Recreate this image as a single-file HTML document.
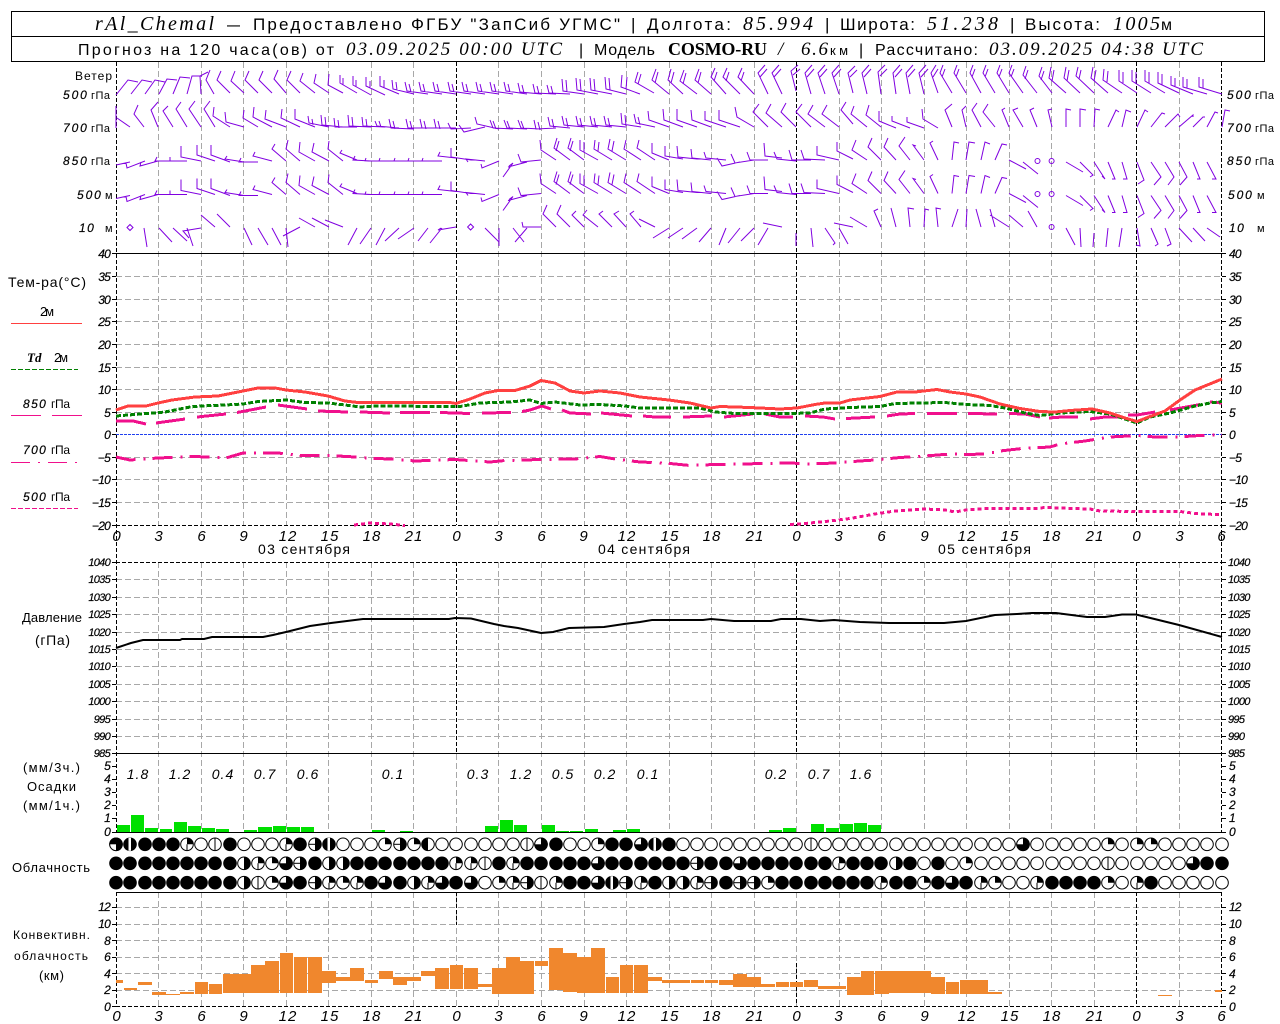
<!DOCTYPE html>
<html lang="ru"><head><meta charset="utf-8"><title>rAl_Chemal</title>
<style>
html,body{margin:0;padding:0;background:#fff}
svg{display:block}
text{font-family:"Liberation Sans","DejaVu Sans",sans-serif;fill:#000}
.s{font-family:"Liberation Serif",serif;font-style:italic}
.b{font-family:"Liberation Serif",serif;font-weight:bold}
.n{font-style:italic;font-size:12px;letter-spacing:-.8px;stroke:#000;stroke-width:.2}
.p{font-style:italic;font-size:11px;letter-spacing:-.7px;stroke:#000;stroke-width:.2}
.h{font-style:italic;font-size:15px;letter-spacing:1px;text-anchor:middle}
.l{font-size:12px;letter-spacing:1px}
.e{text-anchor:end}
.m{text-anchor:middle}
.v{font-style:italic;font-size:14px;letter-spacing:1px;text-anchor:middle}
.t{font-size:17px}
.u{font-size:16px}
.s.t{font-size:20px}
.s.u{font-size:19px}
</style></head><body>
<svg width="1280" height="1024" viewBox="0 0 1280 1024" xmlns="http://www.w3.org/2000/svg">
<defs>
<g id="E"><circle r="6.3" fill="#fff" stroke="#000"/></g>
<g id="F"><circle r="6.8" fill="#000"/></g>
<g id="V"><use href="#E"/><path d="M0-6V6" stroke="#000"/></g>
<g id="Q"><use href="#E"/><path d="M0 0V-6.3A6.3 6.3 0 0 1 6.3 0Z"/></g>
<g id="T"><use href="#Q"/><path d="M0 0V6" stroke="#000"/></g>
<g id="R"><use href="#E"/><path d="M0-6.3A6.3 6.3 0 0 1 0 6.3Z"/></g>
<g id="L"><use href="#E"/><path d="M0-6.3A6.3 6.3 0 0 0 0 6.3Z"/></g>
<g id="I"><use href="#R"/><path d="M-6 0H0" stroke="#000"/></g>
<g id="S"><use href="#F"/><rect x="-1.5" y="-6.5" width="2.5" height="13" fill="#fff"/></g>
<g id="A"><use href="#F"/><path d="M0 0V-6H-6V0Z" fill="#fff"/><circle r="6.3" fill="none" stroke="#000"/></g>
<g id="a"><use href="#F"/><path d="M0 0V6H-6V0Z" fill="#fff"/><circle r="6.3" fill="none" stroke="#000"/></g>
</defs>

<!-- Title boxes -->
<path d="M11.5 11.5H1264.5V61.5H11.5ZM11.5 36.5H1264.5" fill="none" stroke="#000" shape-rendering="crispEdges"/>
<text class="s t" x="95" y="30" textLength="119" lengthAdjust="spacing">rAl_Chemal</text>
<text class="t" x="227" y="30" textLength="13" lengthAdjust="spacingAndGlyphs">—</text>
<text class="t" x="253" y="30" textLength="367">Предоставлено ФГБУ "ЗапСиб УГМС"</text>
<text class="t" x="631" y="30">|</text>
<text class="t" x="647" y="30" textLength="84">Долгота:</text>
<text class="s t" x="743" y="30" textLength="70">85.994</text>
<text class="t" x="825" y="30">|</text>
<text class="t" x="840" y="30" textLength="75">Широта:</text>
<text class="s t" x="927" y="30" textLength="71">51.238</text>
<text class="t" x="1010" y="30">|</text>
<text class="t" x="1025" y="30" textLength="75">Высота:</text>
<text class="s t" x="1113" y="30" textLength="47">1005</text>
<text class="u" x="1161" y="30" textLength="12">м</text>

<text class="u" x="78" y="55" textLength="256">Прогноз на 120 часа(ов) от</text>
<text class="s u" x="346" y="55" textLength="216">03.09.2025 00:00 UTC</text>
<text class="u" x="579" y="55">|</text>
<text class="u" x="594" y="55" textLength="61">Модель</text>
<text class="b u" x="668" y="55" textLength="99" style="font-size:18px">COSMO-RU</text>
<text class="s u" x="778" y="55">/</text>
<text class="s u" x="801" y="55" textLength="27">6.6</text>
<text x="830" y="55" textLength="18" style="font-size:13px">км</text>
<text class="u" x="859" y="55">|</text>
<text class="u" x="875" y="55" textLength="103">Рассчитано:</text>
<text class="s u" x="989" y="55" textLength="214">03.09.2025 04:38 UTC</text>

<g shape-rendering="crispEdges">
<!-- grey grid -->
<path fill="none" stroke="#a8a8a8" stroke-dasharray="6 3" d="
M158.5 62V525M201.5 62V525M243.5 62V525M286.5 62V525M328.5 62V525M371.5 62V525M413.5 62V525M498.5 62V525M541.5 62V525M584.5 62V525M626.5 62V525M669.5 62V525M711.5 62V525M754.5 62V525M839.5 62V525M881.5 62V525M924.5 62V525M966.5 62V525M1009.5 62V525M1051.5 62V525M1094.5 62V525M1179.5 62V525
M158.5 562V832M201.5 562V832M243.5 562V832M286.5 562V832M328.5 562V832M371.5 562V832M413.5 562V832M456.5 754V832M498.5 562V832M541.5 562V832M584.5 562V832M626.5 562V832M669.5 562V832M711.5 562V832M754.5 562V832M796.5 754V832M839.5 562V832M881.5 562V832M924.5 562V832M966.5 562V832M1009.5 562V832M1051.5 562V832M1094.5 562V832M1136.5 754V832M1179.5 562V832
M158.5 892V1006M201.5 892V1006M243.5 892V1006M286.5 892V1006M328.5 892V1006M371.5 892V1006M413.5 892V1006M456.5 892V1006M498.5 892V1006M541.5 892V1006M584.5 892V1006M626.5 892V1006M669.5 892V1006M711.5 892V1006M754.5 892V1006M796.5 892V1006M839.5 892V1006M881.5 892V1006M924.5 892V1006M966.5 892V1006M1009.5 892V1006M1051.5 892V1006M1094.5 892V1006M1179.5 892V1006
M116 276.5H1222M116 299.5H1222M116 321.5H1222M116 344.5H1222M116 367.5H1222M116 389.5H1222M116 412.5H1222M116 457.5H1222M116 479.5H1222M116 502.5H1222
M116 579.5H1222M116 597.5H1222M116 614.5H1222M116 632.5H1222M116 649.5H1222M116 666.5H1222M116 684.5H1222M116 701.5H1222M116 719.5H1222M116 736.5H1222
M116 907.5H1222M116 924.5H1222M116 940.5H1222M116 957.5H1222M116 973.5H1222M116 990.5H1222"/>
<!-- day lines and axes -->
<path fill="none" stroke="#000" stroke-dasharray="4 2" d="M116.5 62V832M1221.5 62V832M116.5 892V1006M1221.5 892V1006M456.5 62V525M796.5 62V525M1136.5 62V525M456.5 562V754M796.5 562V754M1136.5 562V754M456.5 892V925M796.5 963V1003M1136.5 892V1006M116 525.5H1222M116 562.5H1222M116 1006.5H1222"/>
<path fill="none" stroke="#000" d="M116 253.5H1222M116 753.5H1222M116 832.5H1222M116 892.5H1222"/>
<path fill="none" stroke="#000" d="M112 253.5h4M112 276.5h4M112 299.5h4M112 321.5h4M112 344.5h4M112 367.5h4M112 389.5h4M112 412.5h4M112 434.5h4M112 457.5h4M112 479.5h4M112 502.5h4M112 525.5h4M112 562.5h4M112 579.5h4M112 597.5h4M112 614.5h4M112 632.5h4M112 649.5h4M112 666.5h4M112 684.5h4M112 701.5h4M112 719.5h4M112 736.5h4M112 753.5h4M112 766.5h4M112 779.5h4M112 792.5h4M112 805.5h4M112 818.5h4M112 832.5h4M112 907.5h4M112 924.5h4M112 940.5h4M112 957.5h4M112 973.5h4M112 990.5h4M112 1006.5h4
M1222 253.5h4M1222 276.5h4M1222 299.5h4M1222 321.5h4M1222 344.5h4M1222 367.5h4M1222 389.5h4M1222 412.5h4M1222 434.5h4M1222 457.5h4M1222 479.5h4M1222 502.5h4M1222 525.5h4M1222 562.5h4M1222 579.5h4M1222 597.5h4M1222 614.5h4M1222 632.5h4M1222 649.5h4M1222 666.5h4M1222 684.5h4M1222 701.5h4M1222 719.5h4M1222 736.5h4M1222 753.5h4M1222 766.5h4M1222 779.5h4M1222 792.5h4M1222 805.5h4M1222 818.5h4M1222 832.5h4M1222 907.5h4M1222 924.5h4M1222 940.5h4M1222 957.5h4M1222 973.5h4M1222 990.5h4M1222 1006.5h4"/>
</g>

<!-- Wind barbs -->
<g fill="none" stroke="#8000e0" stroke-width="1">
<path id="r1" d="M116 95l12-15 10 2M131 94l11-14 10 2M145 94l10-14 10 2M159 94l8-15 10 1M173 94l7-17 10 1M187 94l5-18 10 0M201 94l-1-18 8-4M214 94l-8-14 4-10M230 93l-13-13 4-9M244 93l-13-12 4-10M258 93l-13-13 4-9M272 93l-13-13 4-9M286 93l-12-14 4-9M300 93l-13-13 4-9M315 93l-15-12 3-8M329 93l-15-10 2-9M343 93l-15-8 1-11M357 93l-17-10 0-8m3 10 0-7M371 95l-18-10 0-9m3 11 0-7M385 95l-19-9 0-9m4 11 0-7M399 94l-19-8 0-10m4 12 0-8M414 94l-21-5-1-9m5 10-1-8
M428 94l-21-3-2-9m6 10-2-8M442 94l-21-3-2-9m6 10-2-8M456 94l-21-3-2-9m6 10-2-8M471 94l-21-3-2-9m6 10-2-8M485 94l-21-3-2-9m6 10-2-8M499 94l-21-3-2-9m6 10-2-8M513 94l-21-3-2-9m6 10-2-8M527 94l-21-3-2-9m6 10-2-8M541 94l-21-2-2-9m6 10-2-8M556 94l-21-1-2-9m6 10-2-8M570 94l-21-1-2-8m6 9-2-8M584 94l-21-3-1-12m5 13-1-12M598 94l-21-4-1-12m5 13-1-12M612 94l-21-4-1-12m5 13-1-12M626 94l-20-5-1-12m5 13-1-12M640 94l-19-7 1-12m4 14 1-12
M654 93l-19-11 3-10m0 12 3-10M669 94l-17-14 4-11m-1 14 3-11M683 94l-15-14 3-11m0 14 3-11M697 94l-17-13 4-11m-1 14 3-11M711 94l-16-14 4-11m-1 14 3-11M726 94l-15-17 4-9m-1 13 3-9M740 94l-17-17 4-9m-1 13 3-9M754 94l-16-17 4-9m-1 13 3-9
M768 94l-10-21 7-8m-5 12 7-8M782 94l-10-21 7-8m-5 12 7-8M796 91l-5-20 7-6m-5 10 7-6M811 94l-6-21 7-8m-5 12 7-8M825 94l-7-21 7-8m-5 12 7-8M839 94l-7-21 7-8m-5 12 7-8M853 93l-5-20 7-7m-5 11 7-7M867 94l-5-21 7-8m-5 12 7-8M881 94l-3-22 7-7m-5 11 7-7M896 94l-3-21 7-8m-5 12 7-8M910 94l-4-21 7-8m-5 12 7-8M924 94l-5-21 7-8m-5 12 7-8M938 93l-7-20 5-8m-3 12 5-8
M952 93l-12-20 3-8m-1 12 3-8M966 93l-12-20 3-8m-1 12 3-8M981 93l-11-20 3-8m-1 12 3-8M995 93l-12-20 3-8m-1 12 3-8M1009 93l-12-20 3-8m-1 12 3-8M1023 93l-14-20 3-8m-1 12 3-8M1037 93l-14-18 3-9m-1 13 3-9M1052 93l-13-17 3-9m-1 13 3-9
M1066 93l-17-15 2-11m1 14 2-11M1080 93l-16-15 2-11m1 14 2-11M1094 93l-18-17 2-9m1 12 2-9M1108 93l-17-15 2-11m1 14 2-11M1122 93l-19-13 1-11m3 13 1-11M1137 93l-18-12 0-11m4 13 0-11M1151 93l-19-12 0-11m4 13 0-11M1165 93l-20-12 0-11m4 13 0-11M1179 93l-21-10 0-11m4 13 0-11M1193 94l-22-9 0-9m4 11 0-9M1207 94l-24-7 0-10m4 12 0-10M1222 94l-23-7 0-10m4 12 0-10"/>
<path id="r2" d="M116 128l0-22M130 127l-13-9M144 127l-10-13 4-9M158 127l-7-17 7-8M173 127l-10-16 5-5M187 127l-11-18 5-7M201 127l-12-18 6-8M215 127l-11-18 6-8M230 127l-17-11 1-9M244 127l-18-5-1-10M258 127l-15-9 1-8M272 127l-19-10 1-10M286 127l-21-8 1-9M300 127l-19-9 1-9M315 127l-20-8 0-10M329 127l-20-4-1-7m5 9-1-6M343 127l-21-2-1-10m5 11-1-9M357 127l-22 0-1-9m5 10-1-8M371 127l-22-1-1-11m5 12-1-10M385 127l-22-1-1-9m5 10-1-8M399 128l-22-2-2-5m6 6-2-6M414 129l-23-1-2-9m6 10-2-8
M428 128l-20 0-2-9m6 10-2-8M442 128l-20 0-2-9m6 10-2-8M456 128l-20 0-2-9m6 10-2-8M471 128l-20 1-3-6M485 127l-21 5-5-7M499 129l-22-5-2-7M513 129l-20-1-3-8m6 9-3-8M527 129l-20-1-3-8m6 9-3-8M541 129l-20-1-3-8m6 9-3-8M556 128l-20 1-2-9m6 10-2-8M570 128l-20-2-2-9m6 11-2-9M584 127l-20-2-2-9m6 11-2-9M598 127l-20-2-2-9m6 11-2-9M612 127l-20-2-2-9m6 11-2-9M626 127l-20-2-2-9m6 11-2-9M641 127l-19-3-1-11m5 13-1-11M655 127l-19-4-2-9m6 11-2-8
M669 127l-20-7-1-9M683 127l-19-7-1-11M697 127l-20-7 0-11M711 127l-19-7-1-10M726 127l-21-7 0-9M740 127l-21-7 0-10M754 127l-17-10-2-10M768 127l-15-15 6-8M782 127l-16-14 5-9M796 127l-15-15 5-9M811 127l-15-15 6-8M825 127l-17-13 5-9M839 127l-17-13 5-9M853 124l-12-14 5-8M867 127l-16-13 3-8M881 127l-15-12 3-10M896 128l-17-7 0-10M910 128l-18-7 0-5M924 128l-17-6 0-5M938 128l-15-9-1-10M952 127l-7-17 7-6M966 127l-4-17 4-4M981 127l-9-17 5-7M995 127l-12-15 5-8M1009 127l-7-17 3-2M1023 127l-10-17 5-2M1037 127l-7-17 4-2M1052 127l-4-17 4-1M1066 127l0-18 5 1M1080 127l0-18 6 1M1094 127l1-18 5 1M1108 127l8-17 3 2M1122 127l4-17 5 2M1137 127l8-17 3 2M1151 127l11-14 3 1M1165 127l13-13 2 3M1179 127l14-12 0 2M1193 127l10-10 2 0M1207 127l8-15 3 1M1222 127l3-17 5 1"/>
<path id="r3" d="M130 162l-14 3M145 161l-18 7-1-5M158 161l-18 5 1-4M173 161l-18 0 2-4M187 161l-17 0 0-4M201 161l-20-4 0-11M215 161l-18-6 0-10M230 162l-19-7 0-10M244 162l-19-3 2-3M258 162l-19 0 2-4M272 161l-19-5 2-4M286 161l-14-12 3-5M300 161l-14-12 2-9M315 161l-16-9 1-10M329 161l-17-9 2-9M343 161l-15-12 1-8M357 160l-17-7 2-3M371 161l-18-1 2-4M385 161l-20 0 1-3M399 161l-20 0 1-3M414 161l-20 0 1-3M428 161l-20 0 1-3M442 161l-20 0 1-3M456 158l-18-2 2-4M471 160l-20-3 0-9M485 161l-19-2 2 3M499 161l-17 7-1-4M513 163l-10 14M513 163l-4 3M527 162l-19 5M541 160l-20 2-3-8M556 160l-15-10-1-10M570 160l-16-12 3-10m-1 13 3-10M584 160l-16-12 3-10m-1 13 3-10M598 160l-18-10 0-10m4 12 0-10M612 160l-18-11 1-9m3 11 1-9M626 160l-18-11 2-10m2 12 2-10M641 160l-17-11 2-9M655 160l-18-12 2-8M669 160l-17-7 0-10M683 159l-18-3 0-10M697 159l-19-2-1-11M711 160l-19-2-1-9M726 160l-20-2-2-6M740 162l-18 4-5-8M754 160l-19 3-4-9M768 160l-18 0-3-8M782 158l-17-2-1-13M796 161l-19-2-3-7M811 160l-19 0-3-10M825 160l-21-1-3-9M839 160l-22-5 0-9M853 159l-16-8 0-9M867 160l-15-10 4-10M881 160l-13-13 4-9M896 160l-12-13 4-9M910 160l-11-14 6-9M924 160l-11-15 3 1M938 160l-8-17 3-2M952 160l2-18 5 1M966 160l3-18 6 1M981 160l4-18 5 2M995 160l7-16 5 1M1009 160l17 9M1023 162l15 12M1066 162l17 10M1080 162l13 13-3 2M1094 162l11 17-3-3M1108 162l7 17-3 0M1122 162l5 17-4 0M1137 162l7 18-6 4M1151 162l10 15-7 8M1165 162l9 15-6 8M1179 162l8 15-7 8M1193 162l7 17-3 0M1207 162l9 17-4 0"/>
<use href="#r3" y="33.5"/>
<path id="r5" d="M144 228l3 19M159 228l13 14M173 228l14 13M187 228l6 18M201 228l-18 3 6 7M215 227l-14-12M230 227l-13-13M244 228l8 17M258 228l10 17M272 228l9 17M286 228l2 19M300 227l-17 9M315 227l-16-9M329 227l-17-9M343 227l-18-7M357 228l-9 17M371 228l-11 16M385 228l-9 17M399 228l-14 13M414 228l-16 11M428 228l-10 13M442 228l-12 15M456 227l-18 3 3-2M485 228l14 14M499 228l0 18M513 228l11 14M527 228l-12 14M541 227l-18 0-1-5M556 227l-13-13 4-9M570 227l-13-13 4-9M584 227l-12-12 4-4M598 227l-15-12 4-5M612 227l-13-13 4-3M626 227l-12-13 5-3M641 227l-11-13 4-3M655 227l-16-8M669 228l-16 10M683 228l-15 10M697 228l-15 11M711 228l-12 14M726 228l-7 17M740 228l-12 15M754 228l-13 13M768 228l-10 17M782 227l-19-4M796 233l0 13M811 228l2 19M825 228l10 15-2 2M839 228l9 16M853 227l-19-4M867 227l-17-10M881 227l-7-16 4-2M896 227l-5-19M910 227l-2-19 6 1M924 227l1-18 4 1M938 227l-2-19 5 1M952 227l6-18M966 227l1-18M981 227l-5-18M995 227l-5-18M1009 227l-19-12M1023 227l-14-12M1037 227l-9-16M1066 228l9 17M1080 228l1 19M1094 233l-1 14M1108 228l-2 19M1122 228l-3 19M1137 228l3 18-4-1M1151 228l7 16-3 2M1165 228l6 16-4 2M1179 228l13 14M1193 228l12 13M1207 228l13 9"/>
<path d="M130 224.5l3 3-3 3-3-3zM470.6 224l3 3-3 3-3-3z"/>
<circle cx="1037.5" cy="161" r="2.5"/><circle cx="1051.6" cy="161" r="2.5"/><circle cx="1037.5" cy="194" r="2.5"/><circle cx="1051.6" cy="194" r="2.5"/><circle cx="1051.6" cy="227" r="2.5"/>
</g>

<!-- Temperature -->
<g fill="none" shape-rendering="crispEdges">
<path stroke="#2040f0" stroke-dasharray="3 1" d="M116 434.5H1222"/>
<path stroke="#f0108c" stroke-width="3" stroke-dasharray="4 3" d="M354 525L370 523 390 524 405 525.5M790 524.5L805 523.5 830 521 850 518.5 875 514 895 511 925 509 945 510 955 512 966 510 985 508.5 1035 508.5 1045 507.5 1060 508 1090 509 1100 511 1137 511.5 1180 511.5 1200 514 1222 514.5"/>
<path stroke="#f0108c" stroke-width="3" stroke-dasharray="20 8 2 7" d="M116 457L130 460 158 458 195 456.5 226 458 243 453 255 453 278 453 300 455.5 330 455.5 355 457 375 458.5 392 459 415 461 455 459.5 490 462 505 460.5 541 459.5 575 459 600 456.5 615 459 640 462 665 463 690 465.5 715 464.5 745 464 760 463.5 790 463 810 464 835 463 846 462 860 461 875 460 900 457.5 925 456 950 454 966 454.5 985 454 1000 451 1022 448.5 1050 447 1060 444 1085 441 1110 437 1137 435.5 1155 437 1170 437 1185 436.5 1200 435.5 1222 435"/>
<path stroke="#f0108c" stroke-width="3" d="M116 421L133 421 146 424M156 423L185 419M197 417L226 414M237 412.5L266 407M278 405L307 409M318 411L348 412M360 412L390 413M400 412.5L430 412.5M440 412.5L470 413.5M482 413L511 412.5M522 411.5L530 410 542 406 551 409M562 410L570 413 591 414M601 413L632 416M643 416L655 417 671 417M683 417L712 416M724 417L753 414M765 414L780 417 793 417M805 416L823 417 835 419M846 418.5L875 417M887 416L900 414 915 413.5M927 413.5L957 413.5M968 413.5L997 414M1009 413.5L1025 414 1040 417M1049 418L1062 417 1078 417M1090 419L1105 417 1118 417M1128 415L1137 415 1155 412M1170 410L1200 404.5M1210 402L1222 403"/>
<path stroke="#008000" stroke-width="3" stroke-dasharray="5 2" d="M116 416L165 412 190 407 201 406 225 405 243 404 258 401.5 286 400 305 402.5 328 403 345 405 360 407 375 406 420 406.3 460 406.5 480 403 510 402 530 400 541 403.5 555 402 580 405 600 404.5 625 406 640 408 700 408 715 412 735 413.5 790 413.5 810 413 825 409 850 407.5 880 406.5 895 403.5 920 403 945 402.5 966 404.5 990 405.5 1005 408 1025 413 1040 415.5 1060 413 1090 411.5 1110 414 1125 419 1137 423 1150 417 1170 413 1195 406 1210 403 1222 401.5"/>
<path stroke="#ff4040" stroke-width="3" d="M116 410L128 406 146 406 158 403 172 400 195 397 218 396 243 391 258 388 275 388 286 390 305 392 328 396 345 401 358 402.5 450 402.5 456 403.5 470 399 485 393 498 390.5 515 390.5 530 386 541 380.5 555 383 570 391 584 393 600 391 620 393 640 397 669 400 690 403 711 408 720 406.5 750 407.5 780 409 797 408 815 404.5 825 403 840 403 850 400 880 396.5 897 392 915 392 937 389.5 950 392 966 394 980 397 1000 404 1020 408.5 1040 411.5 1055 412 1070 410.5 1092 409 1110 413 1125 418 1137 421.5 1150 416.5 1165 411 1180 400 1195 390 1222 379"/>
<!-- Pressure -->
<path stroke="#000" stroke-width="2" shape-rendering="auto" d="M116 648L131 643 143 640 180 640 182 639 204 639 212 637 263 637 273 635 286 632 310 626 331 623 347 621 363 619 449 619 455 618 471 618.5 494 624 504 626 518 628 541 633 553 632 569 628 604 627 624 624 640 622 652 620 703 620 711 619 734 621 771 621 781 619 801 619 820 621 834 620 860 622 889 623 944 623 966 621 995 615 1017 614 1032 613 1056 613 1087 617 1105 617 1122 614.5 1136 614.5 1179 625 1222 637"/>
</g>

<!-- Precip bars -->
<path fill="#00e000" shape-rendering="crispEdges" d="M117 825h13v7h-13zM131 815h13v17h-13zM145 828h13v4h-13zM160 829h12v3h-12zM174 822h13v10h-13zM188 826h13v6h-13zM202 828h13v4h-13zM216 829h13v3h-13zM244 830h13v2h-13zM258 827h14v5h-14zM273 826h13v6h-13zM287 827h13v5h-13zM301 827h13v5h-13zM372 830h13v2h-13zM400 831h13v1h-13zM485 826h13v6h-13zM500 820h13v12h-13zM514 825h13v7h-13zM542 825h13v7h-13zM556 831h13v1h-13zM570 831h13v1h-13zM585 829h13v3h-13zM613 830h13v2h-13zM627 829h13v3h-13zM769 830h13v2h-13zM783 828h13v4h-13zM811 824h13v8h-13zM826 828h13v4h-13zM840 824h13v8h-13zM854 823h13v9h-13zM868 825h13v7h-13z"/>

<!-- Convective bars -->
<path fill="#f0872d" shape-rendering="crispEdges" d="M116 980h7v3h-7zM124 988h13v2h-13zM138 982h14v3h-14zM152 992h14v3h-14zM166 994h14v1h-14zM180 992h14v2h-14zM195 982h13v12h-13zM209 984h13v10h-13zM223 974h28v19h-28zM251 965h14v28h-14zM265 961h14v32h-14zM280 953h13v40h-13zM294 957h13v36h-13zM308 957h14v36h-14zM322 971h14v12h-14zM336 977h14v4h-14zM350 968h14v13h-14zM365 980h13v3h-13zM379 971h14v8h-14zM393 977h14v8h-14zM407 977h14v4h-14zM421 971h14v5h-14zM435 968h14v21h-14zM450 965h13v24h-13zM464 968h14v21h-14zM478 984h14v3h-14zM492 968h14v26h-14zM506 957h14v37h-14zM520 961h14v33h-14zM535 961h13v5h-13zM549 948h14v42h-14zM563 953h14v39h-14zM577 957h14v36h-14zM591 948h14v45h-14zM606 977h13v16h-13zM620 965h13v28h-13zM634 965h14v28h-14zM648 977h14v4h-14zM662 980h28v3h-28zM691 980h13v3h-13zM705 980h13v3h-13zM719 980h14v5h-14zM733 974h14v13h-14zM747 977h14v10h-14zM761 984h14v3h-14zM776 982h13v5h-13zM790 982h13v5h-13zM804 980h14v7h-14zM818 986h28v3h-28zM847 977h14v18h-14zM861 971h13v24h-13zM875 971h14v23h-14zM889 971h42v22h-42zM931 977h14v17h-14zM946 982h13v12h-13zM960 980h28v14h-28zM988 992h14v2h-14zM1158 995h14v1h-14zM1215 990h7v2h-7z"/>

<!-- Cloud rows -->
<g transform="translate(0,844.3)">
<use href="#a" x="116"/><use href="#S" x="130"/><use href="#F" x="145"/><use href="#F" x="159"/><use href="#F" x="173"/><use href="#T" x="187"/><use href="#E" x="201"/><use href="#V" x="215"/><use href="#F" x="230"/><use href="#E" x="244"/><use href="#E" x="258"/><use href="#E" x="272"/><use href="#T" x="286"/><use href="#F" x="300"/><use href="#I" x="315"/><use href="#S" x="329"/><use href="#E" x="343"/><use href="#E" x="357"/><use href="#E" x="371"/><use href="#Q" x="385"/><use href="#I" x="400"/><use href="#Q" x="414"/><use href="#L" x="428"/><use href="#E" x="442"/><use href="#E" x="456"/><use href="#E" x="471"/><use href="#E" x="485"/><use href="#E" x="499"/><use href="#E" x="513"/><use href="#V" x="527"/><use href="#A" x="541"/><use href="#F" x="556"/><use href="#E" x="570"/><use href="#E" x="584"/><use href="#Q" x="598"/><use href="#F" x="612"/><use href="#F" x="626"/><use href="#A" x="641"/><use href="#S" x="655"/><use href="#F" x="669"/><use href="#E" x="683"/><use href="#E" x="697"/><use href="#E" x="711"/><use href="#E" x="726"/><use href="#E" x="740"/><use href="#E" x="754"/><use href="#E" x="768"/><use href="#E" x="782"/><use href="#E" x="796"/><use href="#V" x="811"/><use href="#E" x="825"/><use href="#E" x="839"/><use href="#E" x="853"/><use href="#E" x="867"/><use href="#E" x="881"/><use href="#E" x="896"/><use href="#E" x="910"/><use href="#E" x="924"/><use href="#E" x="938"/><use href="#E" x="952"/><use href="#E" x="966"/><use href="#E" x="981"/><use href="#E" x="995"/><use href="#E" x="1009"/><use href="#A" x="1023"/><use href="#E" x="1037"/><use href="#E" x="1052"/><use href="#E" x="1066"/><use href="#E" x="1080"/><use href="#E" x="1094"/><use href="#Q" x="1108"/><use href="#E" x="1122"/><use href="#Q" x="1137"/><use href="#Q" x="1151"/><use href="#E" x="1165"/><use href="#E" x="1179"/><use href="#E" x="1193"/><use href="#E" x="1207"/><use href="#E" x="1222"/>
</g>
<g transform="translate(0,863.3)">
<use href="#F" x="116"/><use href="#F" x="130"/><use href="#F" x="145"/><use href="#F" x="159"/><use href="#F" x="173"/><use href="#F" x="187"/><use href="#F" x="201"/><use href="#F" x="215"/><use href="#F" x="230"/><use href="#R" x="244"/><use href="#T" x="258"/><use href="#Q" x="272"/><use href="#A" x="286"/><use href="#I" x="300"/><use href="#F" x="315"/><use href="#R" x="329"/><use href="#R" x="343"/><use href="#F" x="357"/><use href="#F" x="371"/><use href="#F" x="385"/><use href="#F" x="400"/><use href="#F" x="414"/><use href="#F" x="428"/><use href="#F" x="442"/><use href="#T" x="456"/><use href="#T" x="471"/><use href="#V" x="485"/><use href="#F" x="499"/><use href="#T" x="513"/><use href="#F" x="527"/><use href="#F" x="541"/><use href="#F" x="556"/><use href="#F" x="570"/><use href="#F" x="584"/><use href="#A" x="598"/><use href="#F" x="612"/><use href="#F" x="626"/><use href="#F" x="641"/><use href="#F" x="655"/><use href="#F" x="669"/><use href="#F" x="683"/><use href="#I" x="697"/><use href="#F" x="711"/><use href="#F" x="726"/><use href="#A" x="740"/><use href="#F" x="754"/><use href="#F" x="768"/><use href="#F" x="782"/><use href="#F" x="796"/><use href="#F" x="811"/><use href="#F" x="825"/><use href="#T" x="839"/><use href="#F" x="853"/><use href="#F" x="867"/><use href="#F" x="881"/><use href="#R" x="896"/><use href="#F" x="910"/><use href="#E" x="924"/><use href="#F" x="938"/><use href="#E" x="952"/><use href="#Q" x="966"/><use href="#E" x="981"/><use href="#E" x="995"/><use href="#E" x="1009"/><use href="#E" x="1023"/><use href="#E" x="1037"/><use href="#E" x="1052"/><use href="#E" x="1066"/><use href="#E" x="1080"/><use href="#E" x="1094"/><use href="#V" x="1108"/><use href="#E" x="1122"/><use href="#E" x="1137"/><use href="#E" x="1151"/><use href="#E" x="1165"/><use href="#E" x="1179"/><use href="#A" x="1193"/><use href="#F" x="1207"/><use href="#F" x="1222"/>
</g>
<g transform="translate(0,882.7)">
<use href="#F" x="116"/><use href="#F" x="130"/><use href="#F" x="145"/><use href="#F" x="159"/><use href="#F" x="173"/><use href="#F" x="187"/><use href="#F" x="201"/><use href="#F" x="215"/><use href="#F" x="230"/><use href="#R" x="244"/><use href="#V" x="258"/><use href="#Q" x="272"/><use href="#A" x="286"/><use href="#F" x="300"/><use href="#I" x="315"/><use href="#T" x="329"/><use href="#Q" x="343"/><use href="#T" x="357"/><use href="#F" x="371"/><use href="#A" x="385"/><use href="#F" x="400"/><use href="#R" x="414"/><use href="#T" x="428"/><use href="#A" x="442"/><use href="#F" x="456"/><use href="#A" x="471"/><use href="#E" x="485"/><use href="#Q" x="499"/><use href="#T" x="513"/><use href="#I" x="527"/><use href="#V" x="541"/><use href="#T" x="556"/><use href="#F" x="570"/><use href="#F" x="584"/><use href="#A" x="598"/><use href="#S" x="612"/><use href="#I" x="626"/><use href="#T" x="641"/><use href="#F" x="655"/><use href="#R" x="669"/><use href="#R" x="683"/><use href="#T" x="697"/><use href="#I" x="711"/><use href="#F" x="726"/><use href="#I" x="740"/><use href="#I" x="754"/><use href="#Q" x="768"/><use href="#F" x="782"/><use href="#F" x="796"/><use href="#F" x="811"/><use href="#F" x="825"/><use href="#F" x="839"/><use href="#F" x="853"/><use href="#F" x="867"/><use href="#T" x="881"/><use href="#F" x="896"/><use href="#F" x="910"/><use href="#Q" x="924"/><use href="#F" x="938"/><use href="#A" x="952"/><use href="#F" x="966"/><use href="#T" x="981"/><use href="#Q" x="995"/><use href="#E" x="1009"/><use href="#E" x="1023"/><use href="#T" x="1037"/><use href="#F" x="1052"/><use href="#F" x="1066"/><use href="#F" x="1080"/><use href="#F" x="1094"/><use href="#Q" x="1108"/><use href="#E" x="1122"/><use href="#T" x="1137"/><use href="#F" x="1151"/><use href="#E" x="1165"/><use href="#E" x="1179"/><use href="#E" x="1193"/><use href="#E" x="1207"/><use href="#E" x="1222"/>
</g>

<!-- Left wind labels -->
<text class="l" x="113" y="80" text-anchor="end">Ветер</text>
<g>
<text class="n" x="63" y="99" textLength="23">500</text><text class="l" x="91" y="99" style="font-size:11px;letter-spacing:.5px">гПа</text>
<text class="n" x="63" y="132" textLength="23">700</text><text class="l" x="91" y="132" style="font-size:11px;letter-spacing:.5px">гПа</text>
<text class="n" x="63" y="165" textLength="23">850</text><text class="l" x="91" y="165" style="font-size:11px;letter-spacing:.5px">гПа</text>
<text class="n" x="77" y="199" textLength="23">500</text><text class="l" x="105" y="199" style="font-size:11px">м</text>
<text class="n" x="79" y="232" textLength="14">10</text><text class="l" x="105" y="232" style="font-size:11px">м</text>
<text class="n" x="1227" y="99" textLength="23">500</text><text class="l" x="1255" y="99" style="font-size:11px;letter-spacing:.5px">гПа</text>
<text class="n" x="1227" y="132" textLength="23">700</text><text class="l" x="1255" y="132" style="font-size:11px;letter-spacing:.5px">гПа</text>
<text class="n" x="1227" y="165" textLength="23">850</text><text class="l" x="1255" y="165" style="font-size:11px;letter-spacing:.5px">гПа</text>
<text class="n" x="1228" y="199" textLength="23">500</text><text class="l" x="1257" y="199" style="font-size:11px">м</text>
<text class="n" x="1229" y="232" textLength="14">10</text><text class="l" x="1257" y="232" style="font-size:11px">м</text>
</g>

<!-- Temp axes -->
<g class="n">
<text class="n e" x="110" y="258">40</text><text class="n e" x="110" y="281">35</text><text class="n e" x="110" y="304">30</text><text class="n e" x="110" y="326">25</text><text class="n e" x="110" y="349">20</text><text class="n e" x="110" y="372">15</text><text class="n e" x="110" y="394">10</text><text class="n e" x="110" y="417">5</text><text class="n e" x="110" y="439">0</text><text class="n e" x="110" y="462">−5</text><text class="n e" x="110" y="484">−10</text><text class="n e" x="110" y="507">−15</text><text class="n e" x="110" y="530">−20</text>
<text class="n" x="1229" y="258">40</text><text class="n" x="1229" y="281">35</text><text class="n" x="1229" y="304">30</text><text class="n" x="1229" y="326">25</text><text class="n" x="1229" y="349">20</text><text class="n" x="1229" y="372">15</text><text class="n" x="1229" y="394">10</text><text class="n" x="1229" y="417">5</text><text class="n" x="1229" y="439">0</text><text class="n" x="1229" y="462">−5</text><text class="n" x="1229" y="484">−10</text><text class="n" x="1229" y="507">−15</text><text class="n" x="1229" y="530">−20</text>
</g>

<!-- Temp legend -->
<text class="l" x="8" y="287" textLength="79" style="font-size:14px">Тем-ра(°С)</text>
<text x="40" y="316" textLength="14" style="font-size:13px">2м</text>
<text class="b" x="27" y="362" style="font-style:italic;font-size:13px">Td</text>
<text x="54" y="362" textLength="14" style="font-size:13px">2м</text>
<text class="n" x="23" y="408" textLength="22">850</text><text class="l" x="51" y="408" textLength="20">гПа</text>
<text class="n" x="23" y="454" textLength="22">700</text><text class="l" x="51" y="454" textLength="20">гПа</text>
<text class="n" x="23" y="501" textLength="22">500</text><text class="l" x="51" y="501" textLength="20">гПа</text>
<g fill="none" shape-rendering="crispEdges">
<path stroke="#ff4040" d="M11 323.5H82"/>
<path stroke="#008000" stroke-dasharray="5 2" d="M11 369.5H78"/>
<path stroke="#f0108c" d="M11 415.5H41M52 415.5H82M11 462.5H30M38 462.5H40M48 462.5H67M75 462.5H77"/>
<path stroke="#f0108c" stroke-dasharray="5 2" d="M11 508.5H78"/>
</g>

<!-- Hour labels -->
<g>
<text class="h" x="117" y="541">0</text><text class="h" x="159" y="541">3</text><text class="h" x="202" y="541">6</text><text class="h" x="244" y="541">9</text><text class="h" x="288" y="541">12</text><text class="h" x="330" y="541">15</text><text class="h" x="372" y="541">18</text><text class="h" x="414" y="541">21</text><text class="h" x="457" y="541">0</text><text class="h" x="499" y="541">3</text><text class="h" x="542" y="541">6</text><text class="h" x="584" y="541">9</text><text class="h" x="627" y="541">12</text><text class="h" x="670" y="541">15</text><text class="h" x="712" y="541">18</text><text class="h" x="755" y="541">21</text><text class="h" x="797" y="541">0</text><text class="h" x="839" y="541">3</text><text class="h" x="882" y="541">6</text><text class="h" x="925" y="541">9</text><text class="h" x="967" y="541">12</text><text class="h" x="1010" y="541">15</text><text class="h" x="1052" y="541">18</text><text class="h" x="1095" y="541">21</text><text class="h" x="1137" y="541">0</text><text class="h" x="1180" y="541">3</text><text class="h" x="1222" y="541">6</text>
<text class="h" x="117" y="1021">0</text><text class="h" x="159" y="1021">3</text><text class="h" x="202" y="1021">6</text><text class="h" x="244" y="1021">9</text><text class="h" x="288" y="1021">12</text><text class="h" x="330" y="1021">15</text><text class="h" x="372" y="1021">18</text><text class="h" x="414" y="1021">21</text><text class="h" x="457" y="1021">0</text><text class="h" x="499" y="1021">3</text><text class="h" x="542" y="1021">6</text><text class="h" x="584" y="1021">9</text><text class="h" x="627" y="1021">12</text><text class="h" x="670" y="1021">15</text><text class="h" x="712" y="1021">18</text><text class="h" x="755" y="1021">21</text><text class="h" x="797" y="1021">0</text><text class="h" x="839" y="1021">3</text><text class="h" x="882" y="1021">6</text><text class="h" x="925" y="1021">9</text><text class="h" x="967" y="1021">12</text><text class="h" x="1010" y="1021">15</text><text class="h" x="1052" y="1021">18</text><text class="h" x="1095" y="1021">21</text><text class="h" x="1137" y="1021">0</text><text class="h" x="1180" y="1021">3</text><text class="h" x="1222" y="1021">6</text>
</g>

<text x="258" y="554" textLength="92" style="font-size:14px">03 сентября</text>
<text x="598" y="554" textLength="92" style="font-size:14px">04 сентября</text>
<text x="938" y="554" textLength="93" style="font-size:14px">05 сентября</text>

<!-- Pressure labels -->
<text x="22" y="622" textLength="60" style="font-size:13px">Давление</text>
<text x="35" y="645" textLength="35" style="font-size:14px">(гПа)</text>
<g>
<text class="p e" x="110" y="566">1040</text><text class="p e" x="110" y="583">1035</text><text class="p e" x="110" y="601">1030</text><text class="p e" x="110" y="618">1025</text><text class="p e" x="110" y="636">1020</text><text class="p e" x="110" y="653">1015</text><text class="p e" x="110" y="670">1010</text><text class="p e" x="110" y="688">1005</text><text class="p e" x="110" y="705">1000</text><text class="p e" x="110" y="723">995</text><text class="p e" x="110" y="740">990</text><text class="p e" x="110" y="757">985</text>
<text class="p" x="1228" y="566">1040</text><text class="p" x="1228" y="583">1035</text><text class="p" x="1228" y="601">1030</text><text class="p" x="1228" y="618">1025</text><text class="p" x="1228" y="636">1020</text><text class="p" x="1228" y="653">1015</text><text class="p" x="1228" y="670">1010</text><text class="p" x="1228" y="688">1005</text><text class="p" x="1228" y="705">1000</text><text class="p" x="1228" y="723">995</text><text class="p" x="1228" y="740">990</text><text class="p" x="1228" y="757">985</text>
</g>

<!-- Precip labels -->
<text x="23" y="772" textLength="57" style="font-size:13px">(мм/3ч.)</text>
<text x="27" y="791" textLength="49" style="font-size:13px">Осадки</text>
<text x="23" y="810" textLength="57" style="font-size:13px">(мм/1ч.)</text>
<g>
<text class="n e" x="110" y="770">5</text><text class="n e" x="110" y="783">4</text><text class="n e" x="110" y="796">3</text><text class="n e" x="110" y="809">2</text><text class="n e" x="110" y="822">1</text><text class="n e" x="110" y="836">0</text>
<text class="n" x="1229" y="770">5</text><text class="n" x="1229" y="783">4</text><text class="n" x="1229" y="796">3</text><text class="n" x="1229" y="809">2</text><text class="n" x="1229" y="822">1</text><text class="n" x="1229" y="836">0</text>
<text class="v" x="138" y="779">1.8</text><text class="v" x="180" y="779">1.2</text><text class="v" x="223" y="779">0.4</text><text class="v" x="265" y="779">0.7</text><text class="v" x="308" y="779">0.6</text><text class="v" x="393" y="779">0.1</text><text class="v" x="478" y="779">0.3</text><text class="v" x="521" y="779">1.2</text><text class="v" x="563" y="779">0.5</text><text class="v" x="605" y="779">0.2</text><text class="v" x="648" y="779">0.1</text><text class="v" x="776" y="779">0.2</text><text class="v" x="819" y="779">0.7</text><text class="v" x="861" y="779">1.6</text>
</g>

<text x="12" y="872" textLength="78" style="font-size:13px">Облачность</text>
<text x="13" y="939" textLength="77" style="font-size:12px">Конвективн.</text>
<text x="14" y="960" textLength="74" style="font-size:12px">облачность</text>
<text x="39" y="980" textLength="25" style="font-size:13px">(км)</text>
<g>
<text class="n e" x="110" y="911">12</text><text class="n e" x="110" y="928">10</text><text class="n e" x="110" y="945">8</text><text class="n e" x="110" y="961">6</text><text class="n e" x="110" y="978">4</text><text class="n e" x="110" y="994">2</text><text class="n e" x="110" y="1011">0</text>
<text class="n" x="1229" y="911">12</text><text class="n" x="1229" y="928">10</text><text class="n" x="1229" y="945">8</text><text class="n" x="1229" y="961">6</text><text class="n" x="1229" y="978">4</text><text class="n" x="1229" y="994">2</text><text class="n" x="1229" y="1011">0</text>
</g>
</svg>
</body></html>
